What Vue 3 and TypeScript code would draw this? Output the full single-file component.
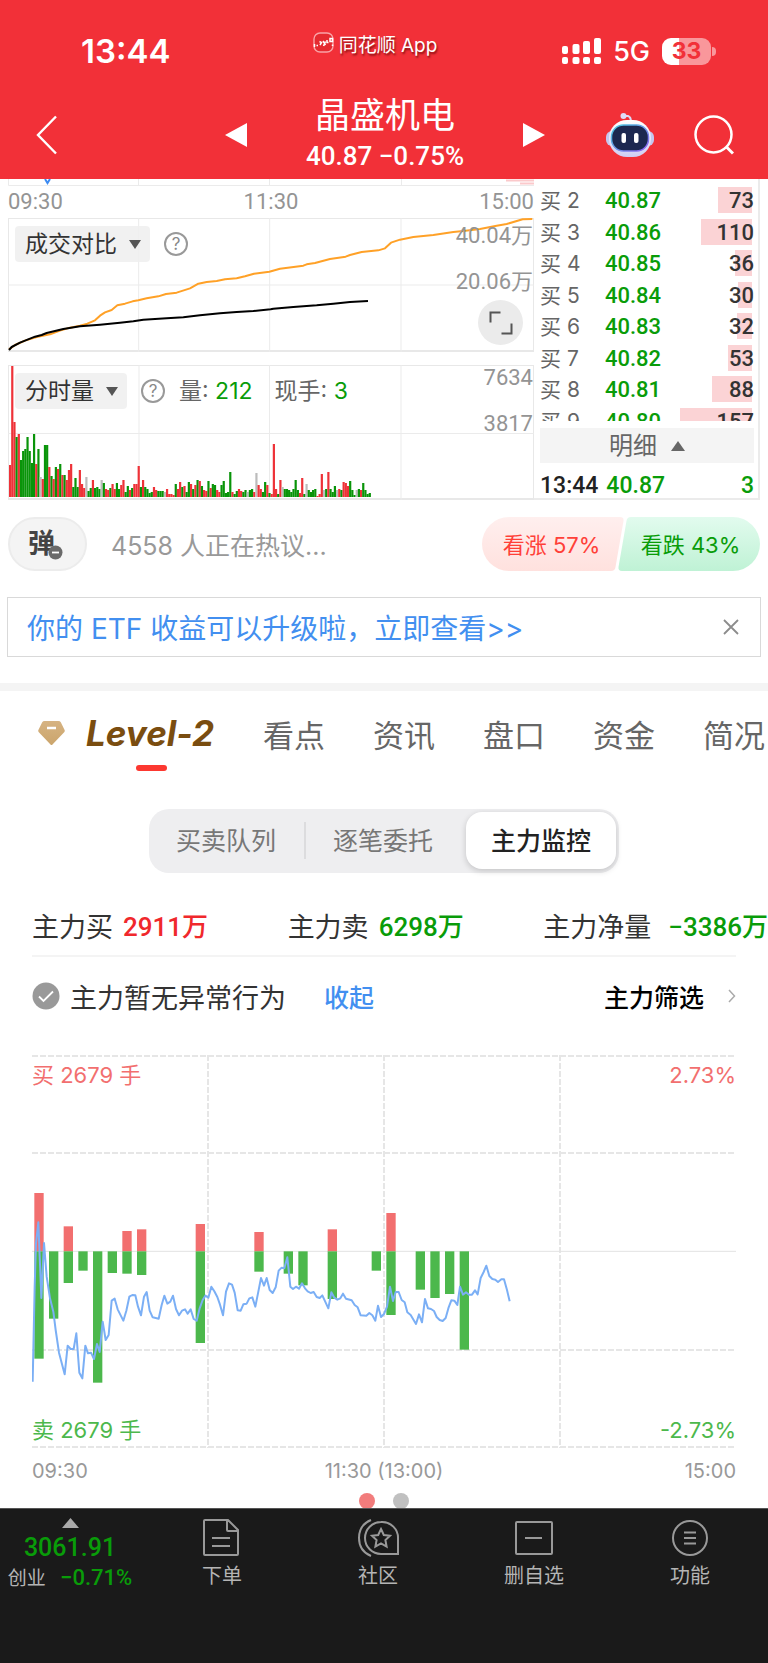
<script setup lang="ts">
import { ref } from 'vue'

interface Quote { level: string; price: string; qty: number }

const quotes: Quote[] = [
  { level: '2', price: '40.87', qty: 73 },
  { level: '3', price: '40.86', qty: 110 },
  { level: '4', price: '40.85', qty: 36 },
  { level: '5', price: '40.84', qty: 30 },
  { level: '6', price: '40.83', qty: 32 },
  { level: '7', price: '40.82', qty: 53 },
  { level: '8', price: '40.81', qty: 88 },
  { level: '9', price: '40.80', qty: 157 },
]

const mode = ref('成交对比')
const volumeMode = ref('分时量')

const turnoverPrev =
  '27,523 45,510 75,497 110,486 150,478 180,467 210,458 240,452 262,446 285,436 300,422 315,412 335,405 352,391 375,386 398,379 415,376 440,370 475,364 498,357 530,353 570,340 595,326 620,321 650,318 675,313 710,310 735,304 762,296 808,290 840,281 910,272 920,268 945,264 990,252 1037,245 1050,240 1085,231 1135,226 1155,220 1173,203 1200,194 1240,186 1300,180 1360,171 1390,168 1440,162 1490,152 1520,147 1568,133 1597,132'
const turnoverToday =
  '27,525 35,516 60,503 105,485 125,480 140,474 190,462 240,454 300,449 360,443 400,439 430,434 500,430 550,427 600,421 660,415 710,411 760,408 812,403 820,401 880,396 950,391 1000,386 1050,381 1104,378'

/* One entry per minute: r = up, g = down, n = unchanged, followed by the height. */
const volumes =
  'r32 r131 r75 g60 r63 g37 g46 g48 g60 g46 g34 g63 r33 g48 n20 r18 g52 g52 r30 g21 r18 g30 r28 g33 r22 g22 r17 r27 r33 g10 g19 g10 r27 r13 r9 n20 g6 g9 r17 g9 g10 g8 n17 g14 r8 r7 g9 r13 r8 g14 g8 r12 r17 g5 g11 r7 g9 r13 r13 r31 g10 r17 g10 g8 g4 g5 r10 r7 g6 g6 g6 n5 r8 r3 r3 r2 g13 r8 r15 g10 r11 g5 g15 r13 g8 r12 g17 r16 g11 r7 r6 g16 r9 g13 g12 r7 r5 g12 g16 g4 g5 g25 r5 g3 g6 r8 r6 g5 g7 n5 g7 g8 r5 n24 r12 r8 g5 g15 r12 g4 r3 r53 r8 g3 r17 n10 g8 g8 g7 g5 g8 g17 g7 r4 r19 g3 n13 g7 g5 g7 g8 r1 r3 r23 n7 g8 r25 g8 g5 g11 n7 r8 g7 r15 r14 r11 g16 g7 g2 n7 g8 r7 g14 g7 g3 g4'
    .split(' ')
    .map((v, i) => ({ kind: v[0], h: Number(v.slice(1)), x: 1 + i * 2.18 }))

/* Slot index, buy height, sell height. */
const flows: [number, number, number][] = [
  [0, 175, 322], [1, 0, 202], [2, 75, 95], [3, 0, 58], [4, 0, 394], [5, 0, 65],
  [6, 61, 67], [7, 66, 71], [11, 82, 275], [15, 58, 61], [17, 0, 67], [18, 0, 102],
  [20, 66, 143], [23, 0, 58], [24, 115, 191], [26, 0, 115], [27, 0, 140], [28, 0, 128], [29, 0, 295],
]

const priceLine =
  '98,635 104,350 108,220 115,157 124,384 132,219 140,320 150,385 160,425 167,480 177,548 194,613 203,527 212,537 221,537 229,490 238,608 247,625 256,527 264,550 273,548 282,567 291,522 299,546 308,455 317,510 326,495 335,392 344,386 353,418 370,452 379,422 388,380 397,375 406,376 414,410 423,436 432,380 440,366 449,422 458,442 476,446 485,405 493,377 502,401 511,395 519,377 528,417 537,436 546,422 555,418 563,431 572,418 581,447 590,452 599,415 608,390 616,377 625,383 634,350 643,364 652,381 660,404 669,436 678,365 687,340 696,344 704,368 713,421 722,422 730,403 740,401 748,385 757,382 766,410 775,365 783,324 792,347 800,324 809,360 818,369 827,352 836,302 845,293 853,295 862,262 871,350 879,357 888,350 897,356 906,340 915,355 923,364 932,369 941,366 950,381 959,384 967,376 985,415 994,367 1003,383 1012,389 1021,385 1029,371 1038,386 1055,391 1064,405 1073,412 1082,436 1099,437 1108,429 1117,436 1126,452 1134,407 1143,441 1152,432 1161,410 1170,350 1179,393 1187,366 1196,366 1205,390 1214,397 1222,427 1232,435 1248,462 1257,433 1266,457 1275,387 1284,415 1293,417 1302,423 1310,441 1319,450 1328,453 1337,444 1346,412 1354,391 1363,392 1372,405 1380,350 1389,374 1398,367 1407,374 1416,374 1425,361 1433,373 1442,324 1451,306 1459,287 1468,318 1477,327 1486,329 1494,336 1504,328 1512,328 1521,360 1529,394'

const tabs = ['看点', '资讯', '盘口', '资金', '简况']
const segments = ['买卖队列', '逐笔委托', '主力监控']
const segment = ref('主力监控')
const stats = [
  { label: '主力买', value: '2911万', tone: 'up' },
  { label: '主力卖', value: '6298万', tone: 'down' },
  { label: '主力净量', value: '−3386万', tone: 'down' },
]
</script>

<template>
  <div class="app">
    <header class="header">
      <div class="status">
        <div class="clock">13:44</div>
        <div class="app-name">
          <svg width="22" height="22" viewBox="0 0 22 22" aria-hidden="true">
            <rect x="1" y="1" width="19" height="19" rx="6" fill="#e52a30" stroke="#f9a3a6" stroke-width="1.4" />
            <path d="M1.500 12v3M3.500 13.500h1.500M6.500 9.500l2 1-1.500 2.500M10 9l2.500 4M12.500 9.500 10.500 14M14 8v2.500h1.500M17 6.500h2.500v3H17zM19.500 12.500v1.500" fill="none" stroke="#fff" stroke-width="1.500" />
          </svg>
          <span>同花顺 App</span>
        </div>
        <div class="signals">
          <svg width="39" height="28" viewBox="0 0 39 28" fill="#fff" aria-hidden="true">
            <rect x="0" y="9" width="6" height="8" rx="2" /><rect x="10.500" y="7" width="7" height="10" rx="2" />
            <rect x="21" y="4" width="7" height="13" rx="2" /><rect x="32" y="1" width="7" height="16" rx="2" />
            <rect x="0" y="20" width="6" height="7" rx="2" /><rect x="10.500" y="20" width="7" height="7" rx="2" />
            <rect x="21" y="20" width="7" height="7" rx="2" /><rect x="32" y="20" width="7" height="7" rx="2" />
          </svg>
          <span class="net">5G</span>
          <span class="battery">33</span>
        </div>
      </div>
      <nav class="nav">
        <button class="icon-btn back" aria-label="返回">
          <svg width="22" height="40" viewBox="0 0 22 40"><path d="M20 1.500 2 20l18 18.500" fill="none" stroke="#fff" stroke-width="2.400" /></svg>
        </button>
        <div class="stock">
          <button class="icon-btn" aria-label="上一只">
            <svg width="22" height="26" viewBox="0 0 22 26"><path d="M22 1v24L0 13z" fill="#fff" /></svg>
          </button>
          <div class="title">
            <h1>晶盛机电</h1>
            <p>40.87 −0.75%</p>
          </div>
          <button class="icon-btn" aria-label="下一只">
            <svg width="22" height="26" viewBox="0 0 22 26"><path d="M0 1v24l22-12z" fill="#fff" /></svg>
          </button>
        </div>
        <div class="actions">
          <button class="icon-btn" aria-label="助手">
            <svg width="48" height="46" viewBox="0 0 48 46">
              <defs>
                <linearGradient id="shell" x1="0" y1="0" x2="0" y2="1"><stop offset="0" stop-color="#fff" /><stop offset="1" stop-color="#cfcdf3" /></linearGradient>
                <linearGradient id="rim" x1="0" y1="0" x2="1" y2="1"><stop offset="0" stop-color="#48cde0" /><stop offset="1" stop-color="#8d5df0" /></linearGradient>
              </defs>
              <path d="M17 4h5q3 1 3 6" fill="none" stroke="#dcd9f5" stroke-width="2" />
              <circle cx="17.500" cy="4" r="3" fill="#dfdcf8" />
              <rect x="0" y="19" width="48" height="15" rx="6" fill="#c5c6ee" />
              <rect x="3" y="8" width="42" height="37" rx="18" fill="url(#shell)" />
              <rect x="5.500" y="13" width="37" height="26" rx="12" fill="#1d2850" stroke="url(#rim)" stroke-width="1.500" />
              <rect x="15.500" y="21" width="4.500" height="10" rx="2" fill="#fff" /><rect x="28" y="21" width="4.500" height="10" rx="2" fill="#fff" />
            </svg>
          </button>
          <button class="icon-btn" aria-label="搜索">
            <svg width="40" height="40" viewBox="0 0 40 40" fill="none" stroke="#fff" stroke-width="2.500"><circle cx="19.500" cy="19.500" r="18" /><path d="m32 31.500 7 7" stroke-width="3" /></svg>
          </button>
        </div>
      </nav>
    </header>

    <main>
      <section class="market">
        <div class="charts">
          <svg class="sliver" viewBox="0 0 526 7" preserveAspectRatio="none" aria-hidden="true">
            <path d="M.5 0v6.500H526M130.500 0v7M261.500 0v7M393.500 0v7" fill="none" stroke="#ebebeb" />
            <path d="m37 0 2.500 4L42 0" fill="none" stroke="#3d8bf2" stroke-width="2" />
            <path d="M498 1.500h28M512 4.500h14" stroke="#fbc9cb" stroke-width="2" />
          </svg>
          <div class="axis"><span>09:30</span><span>11:30</span><span>15:00</span></div>
          <div class="chart">
            <svg class="plot" viewBox="24 129 1578 402" preserveAspectRatio="none" aria-hidden="true">
              <path class="grid" d="M24 330H1602M416 129V531M809 129V531M1203 129V531" />
              <polyline class="line" :points="turnoverPrev" stroke="#ffa127" />
              <polyline class="line" :points="turnoverToday" stroke="#000" />
            </svg>
            <div class="tools">
              <label class="picker">
                <select v-model="mode" aria-label="指标"><option>成交对比</option></select>
                <svg width="12" height="9" viewBox="0 0 12 9"><path d="M0 0h12L6 9z" fill="#555" /></svg>
              </label>
              <button class="help" aria-label="说明">?</button>
            </div>
            <div class="scale"><span>40.04万</span><span>20.06万</span></div>
            <button class="expand" aria-label="全屏">
              <svg width="24" height="24" viewBox="0 0 24 24" fill="none" stroke="#555" stroke-width="2"><path d="M1.500 11.500v-10h10M12.500 22.500h10v-10" /></svg>
            </button>
          </div>
          <div class="chart volume">
            <svg class="plot" viewBox="0 0 526 135" preserveAspectRatio="none" aria-hidden="true">
              <path class="grid" d="M0 68.500H526M131 0V135M261.500 0V135M393 0V135" />
              <rect v-for="(v, i) in volumes" :key="i" :class="v.kind" :x="v.x" :y="132 - v.h" width="2.2" :height="v.h" />
            </svg>
            <div class="tools">
              <label class="picker">
                <select v-model="volumeMode" aria-label="副图"><option>分时量</option></select>
                <svg width="12" height="9" viewBox="0 0 12 9"><path d="M0 0h12L6 9z" fill="#555" /></svg>
              </label>
              <button class="help" aria-label="说明">?</button>
              <span class="reading">量: <b>212</b></span>
              <span class="reading">现手: <b>3</b></span>
            </div>
            <div class="scale"><span>7634</span><span>3817</span></div>
          </div>
        </div>

        <div class="book">
          <div class="book-clip">
            <table>
              <tbody>
                <tr v-for="q in quotes" :key="q.level">
                  <th scope="row">买 {{ q.level }}</th>
                  <td class="price">{{ q.price }}</td>
                  <td class="qty"><i :style="{ width: Math.round(q.qty * 0.46) + 'px' }"></i><span>{{ q.qty }}</span></td>
                </tr>
              </tbody>
            </table>
          </div>
          <button class="detail">明细
            <svg width="14" height="10" viewBox="0 0 14 10"><path d="M0 10h14L7 0z" fill="#666" /></svg>
          </button>
          <div class="tick"><span>13:44</span><span class="down">40.87</span><span class="down last">3</span></div>
        </div>
      </section>

      <section class="talk">
        <button class="danmu" aria-label="弹幕">
          <span>弹</span>
          <svg width="15" height="15" viewBox="0 0 15 15"><circle cx="7.500" cy="7.500" r="7" fill="#6a6a6a" /><path d="M4 7.500h7" stroke="#fff" stroke-width="1.800" /></svg>
        </button>
        <a class="topic" href="#talk">4558 人正在热议...</a>
        <div class="vote">
          <svg class="vote-bg" viewBox="0 0 278 54" preserveAspectRatio="none" aria-hidden="true">
            <defs>
              <linearGradient id="bull" x1="0" y1="0" x2="0" y2="1"><stop offset="0" stop-color="#ffefee" /><stop offset="1" stop-color="#ffe1de" /></linearGradient>
              <linearGradient id="bear" x1="0" y1="0" x2="0" y2="1"><stop offset="0" stop-color="#e2fbee" /><stop offset="1" stop-color="#bff2d5" /></linearGradient>
            </defs>
            <path d="M27 0h111q4 0 3.500 4l-8 46q-.5 4-4.500 4H27a27 27 0 0 1 0-54z" fill="url(#bull)" />
            <path d="M149 0h102a27 27 0 0 1 0 54H140q-4 0-3.500-4l8-46q.5-4 4.500-4z" fill="url(#bear)" />
          </svg>
          <button class="bull">看涨 57%</button>
          <button class="bear">看跌 43%</button>
        </div>
      </section>

      <div class="banner">
        <a href="#etf">你的 ETF 收益可以升级啦，立即查看&gt;&gt;</a>
        <button class="icon-btn" aria-label="关闭">
          <svg width="16" height="16" viewBox="0 0 16 16"><path d="m1 1 14 14M15 1 1 15" stroke="#8c8c8c" stroke-width="1.800" /></svg>
        </button>
      </div>

      <nav class="tabs">
        <button class="level">
          <svg width="27" height="25" viewBox="0 0 27 25"><defs><linearGradient id="gem" x1="0" y1="0" x2="0" y2="1"><stop offset="0" stop-color="#d6b382" /><stop offset="1" stop-color="#cba56c" /></linearGradient></defs><path d="M6.500 0h14q1.500 0 2.300 1.300L26.600 9q.5 1-.2 2L14.500 23.500q-1 1-2 0L.6 11q-.7-1-.2-2L4.200 1.300Q5 0 6.500 0z" fill="url(#gem)" /><path d="M9 7h9" stroke="#fff" stroke-width="2.500" /></svg>
          <span>Level-2</span>
        </button>
        <button v-for="t in tabs" :key="t">{{ t }}</button>
      </nav>

      <div class="segments">
        <button v-for="s in segments" :key="s" :class="{ on: segment === s }" @click="segment = s">{{ s }}</button>
      </div>

      <section class="monitor">
        <dl class="stats">
          <div v-for="s in stats" :key="s.label"><dt>{{ s.label }}</dt><dd :class="s.tone">{{ s.value }}</dd></div>
        </dl>
        <div class="alert">
          <svg width="28" height="28" viewBox="0 0 28 28"><circle cx="14" cy="14" r="13.500" fill="#999" /><path d="m7 14.500 4.500 4.500 9.500-9.500" fill="none" stroke="#fff" stroke-width="1.800" /></svg>
          <span>主力暂无异常行为</span>
          <button class="fold">收起</button>
          <button class="filter">主力筛选
            <svg width="8" height="14" viewBox="0 0 8 14"><path d="m1 1 5.500 6L1 13" fill="none" stroke="#aaa" stroke-width="1.500" /></svg>
          </button>
        </div>
        <div class="flow">
          <svg viewBox="96 -345 2112 1179" preserveAspectRatio="none" aria-hidden="true">
            <path class="dash" d="M96 -342H2208M96 -51H2208M96 540H2208M96 831H2208M624 -345V834M1152 -345V834M1680 -345V834" />
            <path class="zero" d="M96 244H2208" />
            <g v-for="f in flows" :key="f[0]">
              <rect :x="103 + f[0] * 44" :y="244 - f[1]" width="28" :height="f[1]" fill="#f26f6f" />
              <rect :x="103 + f[0] * 44" y="244" width="28" :height="f[2]" fill="#4cb84c" />
            </g>
            <polyline class="line" :points="priceLine" stroke="#7baff5" />
          </svg>
          <div class="flow-labels buy"><span>买 2679 手</span><span>2.73%</span></div>
          <div class="flow-labels sell"><span>卖 2679 手</span><span>-2.73%</span></div>
        </div>
        <div class="times"><span>09:30</span><span>11:30 (13:00)</span><span>15:00</span></div>
        <div class="dots"><i class="on"></i><i></i></div>
      </section>
    </main>

    <footer class="bottom">
      <button class="index">
        <svg width="17" height="10" viewBox="0 0 17 10"><path d="M0 10h17L8.500 0z" fill="#aaa" /></svg>
        <strong>3061.91</strong>
        <span>创业 <b>−0.71%</b></span>
      </button>
      <button>
        <svg width="40" height="40" viewBox="0 0 40 40"><path d="M3 2h23l10 10v24q0 1-1 1H3q-1 0-1-1V3q0-1 1-1zM25 2v10q0 1 1 1h10M10 20h18M10 28h18" /></svg>下单
      </button>
      <button>
        <svg width="44" height="40" viewBox="0 0 44 40"><path d="M25 4a16 16 0 0 1 17 17v15H25a16 16 0 0 1 0-32zM15 2Q3 7 3 20t12 18M25 11l2.800 6 6.200.700-4.600 4.300 1.200 6.500-5.600-3.200-5.600 3.200 1.200-6.500-4.600-4.300 6.200-.700z" /></svg>社区
      </button>
      <button>
        <svg width="40" height="40" viewBox="0 0 40 40"><rect x="2" y="4" width="36" height="32" rx="1" /><path d="M11 20h17" /></svg>删自选
      </button>
      <button>
        <svg width="40" height="40" viewBox="0 0 40 40"><circle cx="20" cy="20" r="17" /><path d="M14 14.500h12M14 20h12M14 25.500h12" /></svg>功能
      </button>
    </footer>
  </div>
</template>

<style>
body { margin: 0; background: #fff; }
</style>

<style scoped>
.app {
  --red: #f23038;
  --up: #f0282c;
  --down: #099c09;
  --num: Roboto, "Noto Sans CJK SC", sans-serif;
  min-height: 100vh;
  display: flex;
  flex-direction: column;
  overflow: hidden;
  font-family: Inter, "Noto Sans CJK SC", sans-serif;
  color: #333;
  background: #fff;
}
button { border: 0; padding: 0; margin: 0; background: none; font: inherit; color: inherit; cursor: pointer; white-space: nowrap; }
a { text-decoration: none; }
svg { display: block; flex: none; }
h1, p, dl, dd { margin: 0; }
main { flex: 1; }
.icon-btn { display: flex; align-items: center; justify-content: center; }

.header { background: var(--red); color: #fff; padding-top: 24px; }
.status { display: grid; grid-template-columns: 1fr auto 1fr; height: 56px; }
.clock { padding-left: 81px; font-size: 33px; line-height: 54px; font-weight: 600; }
.app-name { display: flex; gap: 4px; align-self: start; align-items: center; height: 38px; padding-right: 18px; font-size: 19px; text-shadow: 1px 2px 2px rgba(90, 0, 0, .7); }
.signals { display: flex; justify-content: flex-end; align-items: center; gap: 12px; height: 54px; padding-right: 57px; }
.net { font-size: 27px; font-weight: 500; }
.battery { position: relative; width: 49px; height: 27px; border-radius: 9px; background: linear-gradient(90deg, #fff 34%, #f9979b 34%); color: var(--red); font-size: 23px; line-height: 27px; font-weight: 700; text-align: center; }
.battery::after { content: ""; position: absolute; left: 50px; top: 9px; width: 4px; height: 9px; border-radius: 0 4px 4px 0; background: #f9979b; }
.nav { display: grid; grid-template-columns: 1fr auto 1fr; align-items: center; height: 99px; padding: 10px 34px 0 36px; box-sizing: border-box; }
.back { justify-self: start; }
.stock { display: flex; align-items: center; justify-content: space-between; width: 320px; }
.actions { display: flex; align-items: center; justify-content: flex-end; gap: 40px; }
.title { text-align: center; white-space: nowrap; margin-top: -4px; }
.title h1 { font-size: 35px; line-height: 46px; font-weight: 400; }
.title p { font: 500 26px/36px var(--num); }

.market { display: grid; grid-template-columns: minmax(0, 526fr) minmax(0, 226fr); padding: 0 8px; }
.sliver { width: 100%; height: 7px; }
.axis { display: flex; justify-content: space-between; font: 22px/32px var(--num); color: #949494; }
.chart { position: relative; height: 134px; box-sizing: border-box; border: 1px solid #e8e8e8; border-bottom-width: 2px; }
.volume { height: 135px; margin-top: 13px; }
.plot { position: absolute; left: -1px; top: -1px; width: calc(100% + 2px); height: calc(100% + 3px); }
.grid { fill: none; stroke: #ebebeb; stroke-width: 1px; vector-effect: non-scaling-stroke; }
.line { fill: none; stroke-width: 2px; stroke-linejoin: round; vector-effect: non-scaling-stroke; }
.r { fill: #ee3238; }
.g { fill: #099409; }
.n { fill: #bcbcbc; }
.tools { position: absolute; top: 7px; left: 6px; display: flex; align-items: center; }
.picker { display: flex; align-items: center; gap: 12px; height: 36px; padding: 0 9px 0 10px; border-radius: 4px; background: rgba(238, 238, 238, .85); }
.picker select { appearance: none; border: 0; padding: 0; margin: 0; background: none; font: inherit; font-size: 23px; color: #333; }
.help { width: 24px; height: 24px; box-sizing: border-box; border: 2px solid #999; border-radius: 50%; margin-left: 14px; font-size: 17px; line-height: 20px; color: #888; }
.reading { margin-left: 14px; font-size: 23px; line-height: 32px; color: #666; }
.reading + .reading { margin-left: 22px; }
.reading b { font-weight: 400; color: var(--down); }
.scale { position: absolute; right: 0; top: 2px; display: grid; grid-auto-rows: 46px; text-align: right; font: 22px/30px var(--num); color: #949494; }
.volume .scale { top: -3px; }
.expand { position: absolute; right: 10px; bottom: 5px; width: 45px; height: 45px; border-radius: 50%; background: #ebebeb; display: flex; align-items: center; justify-content: center; }

.book { border-right: 2px solid #ebebeb; border-bottom: 2px solid #ebebeb; padding: 0 4px 0 6px; }
.book-clip { height: 242px; padding-top: 6px; box-sizing: border-box; overflow: hidden; }
table { width: 100%; height: 252px; border-collapse: collapse; table-layout: fixed; }
th, td { padding: 0; font-weight: 400; text-align: left; line-height: 31px; }
th { width: 65px; font-size: 21px; color: #666; }
.price { font: 500 22px/31px var(--num); color: var(--down); }
.qty { position: relative; text-align: right; font: 500 22px/31px var(--num); color: #333; }
.qty i { position: absolute; right: 2px; top: 2px; height: 26px; background: #fbd3d5; }
.qty span { position: relative; }
.detail { display: flex; align-items: center; justify-content: center; gap: 14px; width: 100%; height: 35px; margin-top: 7px; background: #f4f4f4; color: #666; font-size: 24px; line-height: 32px; }
.tick { display: flex; gap: 8px; height: 35px; padding-top: 5px; box-sizing: border-box; font: 500 23px/35px var(--num); color: #222; }
.last { margin-left: auto; }
.up { color: var(--up); }
.down { color: var(--down); }

.talk { display: flex; align-items: center; padding: 17px 8px 0; height: 54px; }
.danmu { display: flex; align-items: flex-end; justify-content: center; box-sizing: border-box; width: 79px; height: 54px; padding: 0 4px 9px 0; border: 2px solid #ececec; border-radius: 27px; background: #f4f4f4; }
.danmu span { font-size: 27px; line-height: 32px; font-weight: 700; color: #444; }
.danmu svg { margin-left: -7px; }
.topic { margin-left: 24px; font-size: 25px; color: #999; }
.vote { position: relative; margin-left: auto; display: grid; grid-template-columns: 1fr 1fr; width: 278px; height: 54px; }
.vote-bg { position: absolute; inset: 0; width: 100%; height: 100%; }
.vote button { position: relative; font-size: 22px; padding-bottom: 2px; }
.bull { color: #ff4038; }
.bear { color: var(--down); }

.banner { display: flex; align-items: center; justify-content: space-between; height: 58px; margin: 26px 7px; padding: 0 21px 0 19px; border: 1px solid #d9d9d9; font-size: 28px; }
.banner a { color: #428ff0; }
.tabs { display: flex; align-items: center; gap: 48px; height: 84px; padding: 0 0 2px 38px; border-top: 8px solid #f4f4f4; font-size: 31px; color: #666; }
.tabs button { flex: none; }
.tabs .level { position: relative; display: flex; align-items: center; gap: 21px; padding-right: 1px; font-size: 35px; font-weight: 700; font-style: italic; color: #7a4d10; }
.level::after { content: ""; position: absolute; left: 98px; bottom: -17px; width: 31px; height: 6px; border-radius: 3px; background: #fc3830; }

.segments { display: flex; align-items: center; width: fit-content; margin: 32px auto 0; padding: 3px 3px 4px; border-radius: 20px; background: #eeeef0; font-size: 25px; color: #777; }
.segments button { height: 57px; padding: 0 33px 3px 27px; }
.segments button.on { padding: 0 25px 3px; border-radius: 16px; background: #fff; color: #222; font-weight: 500; box-shadow: 0 2px 6px rgba(0, 0, 0, .18); }
.segments button:first-child { position: relative; padding: 0 30px 3px 24px; }
.segments button:first-child::after { content: ""; position: absolute; right: 0; top: 10px; width: 2px; height: 37px; background: #dcdcde; }

.monitor { padding: 0 32px; }
.stats { display: grid; grid-template-columns: 8fr 8fr 7fr; margin-right: -32px; padding-top: 26px; height: 58px; position: relative; font-size: 27px; line-height: 58px; }
.stats::after { content: ""; position: absolute; left: 0; right: 32px; bottom: 0; height: 2px; background: #f4f4f4; }
.stats div { display: flex; gap: 10px; white-space: nowrap; }
.stats dd { font: 500 26px/56px var(--num); }
.stats div:last-child { gap: 17px; }
.alert { display: flex; align-items: center; height: 78px; font-size: 27px; }
.alert > span { margin-left: 10px; }
.fold { margin-left: 38px; font-size: 25px; font-weight: 500; color: #428ff0; }
.filter { display: flex; align-items: center; gap: 24px; margin-left: auto; font-size: 25px; font-weight: 500; color: #000; }
.flow { position: relative; margin-top: 20px; height: 393px; }
.flow > svg { width: 100%; height: 100%; }
.dash { fill: none; stroke: #e6e6e6; stroke-width: 2px; stroke-dasharray: 6 2; vector-effect: non-scaling-stroke; }
.zero { stroke: #e2e2e2; stroke-width: 1px; vector-effect: non-scaling-stroke; }
.flow-labels { position: absolute; left: 0; right: 0; display: flex; justify-content: space-between; font-size: 22px; line-height: 32px; }
.buy { top: 4px; color: #f26f6f; }
.sell { bottom: 2px; color: #4cb84c; }
.times { display: grid; grid-template-columns: 1fr auto 1fr; padding-top: 7px; font-size: 20px; line-height: 32px; color: #999; }
.times span:last-child { text-align: right; }
.dots { display: flex; justify-content: center; gap: 18px; padding-top: 6px; height: 15px; overflow: hidden; }
.dots i { width: 16px; height: 16px; border-radius: 50%; background: #c0c0c0; flex: none; }
.dots i.on { background: #f27c7c; }

.bottom { display: grid; grid-template-columns: 144px repeat(4, 1fr); align-items: start; height: 154px; border-top: 1px solid #555; background: #1a1a1a; color: #b4b4b4; font-size: 20px; }
.bottom button { display: flex; flex-direction: column; align-items: center; gap: 4px; padding-top: 9px; line-height: 28px; }
.bottom svg { fill: none; stroke: #999; stroke-width: 2px; }
.bottom .index { gap: 0; padding: 9px 4px 0 0; }
.bottom .index svg { stroke: none; }
.index strong { font: 500 25px/39px var(--num); color: var(--down); }
.index span { font-size: 19px; line-height: 24px; }
.index b { margin-left: 9px; font: 500 22px/22px var(--num); color: var(--down); }
</style>
